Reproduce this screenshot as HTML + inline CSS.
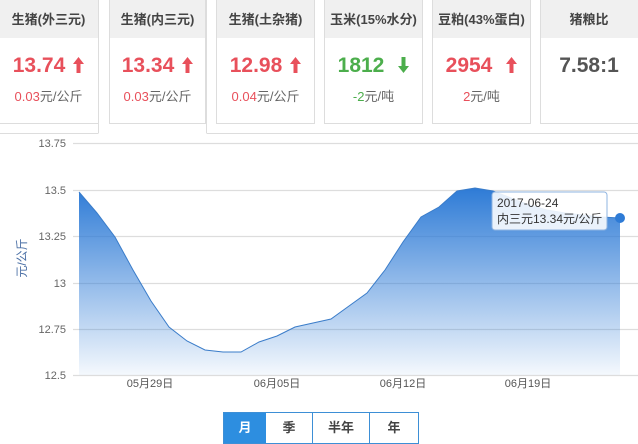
<!DOCTYPE html>
<html><head><meta charset="utf-8"><style>
body{margin:0;width:638px;height:441px;overflow:hidden;background:#fff;font-family:"Liberation Sans","Noto Sans CJK SC",sans-serif;position:relative}
.c{position:absolute;top:-2px;height:126px;border:1px solid #ddd;background:#fff;box-sizing:border-box;text-align:center}
.c .h{height:39px;background:#f0f0f0;line-height:41px;font-size:13px;color:#444;font-weight:bold}
.c .v{font-size:21px;font-weight:bold;margin-top:14px;height:28px;line-height:28px}
.c .s{font-size:13px;color:#666;margin-top:6px}
.r{color:#e8505b}.g{color:#4cae4c}
.ar{display:inline-block;margin-left:8px;vertical-align:-1px}
</style></head><body>
<div style="position:absolute;left:0;top:133px;width:638px;border-top:1px solid #ddd"></div>
<div class="c" style="left:-10px;width:109px"><div class="h" style="padding-left:8px">生猪(外三元)</div><div class="v r" style="padding-left:8px">13.74<svg class="ar" width="11" height="16" viewBox="0 0 11 16"><path d="M5.5 0L11 7H7.5V16H3.5V7H0Z" fill="#e8505b"/></svg></div><div class="s" style="padding-left:8px"><span class="r">0.03</span>元/公斤</div></div>
<div style="position:absolute;left:98px;top:-2px;width:109px;height:136px;border:1px solid #ddd;border-bottom:1px solid #fff;background:#fff;box-sizing:border-box"></div>
<div class="c" style="left:109px;width:97px"><div class="h">生猪(内三元)</div><div class="v r">13.34<svg class="ar" width="11" height="16" viewBox="0 0 11 16"><path d="M5.5 0L11 7H7.5V16H3.5V7H0Z" fill="#e8505b"/></svg></div><div class="s"><span class="r">0.03</span>元/公斤</div></div>
<div class="c" style="left:216px;width:99px"><div class="h">生猪(土杂猪)</div><div class="v r">12.98<svg class="ar" width="11" height="16" viewBox="0 0 11 16"><path d="M5.5 0L11 7H7.5V16H3.5V7H0Z" fill="#e8505b"/></svg></div><div class="s"><span class="r">0.04</span>元/公斤</div></div>
<div class="c" style="left:324px;width:99px"><div class="h">玉米(15%水分)</div><div class="v g">1812<svg class="ar" style="margin-left:14px" width="11" height="16" viewBox="0 0 11 16"><path d="M5.5 16L11 9H7.5V0H3.5V9H0Z" fill="#4cae4c"/></svg></div><div class="s"><span class="g">-2</span>元/吨</div></div>
<div class="c" style="left:432px;width:99px"><div class="h">豆粕(43%蛋白)</div><div class="v r">2954<svg class="ar" style="margin-left:14px" width="11" height="16" viewBox="0 0 11 16"><path d="M5.5 0L11 7H7.5V16H3.5V7H0Z" fill="#e8505b"/></svg></div><div class="s"><span class="r">2</span>元/吨</div></div>
<div class="c" style="left:540px;width:110px"><div class="h" style="padding-right:12px">猪粮比</div><div class="v" style="color:#555;padding-right:12px">7.58:1</div></div>
<svg width="638" height="441" style="position:absolute;left:0;top:0" font-family="Liberation Sans, Noto Sans CJK SC, sans-serif">
<defs><linearGradient id="gr" x1="0" y1="0" x2="0" y2="1"><stop offset="0" stop-color="#2e7bd6"/><stop offset="1" stop-color="#2e7bd6" stop-opacity="0.05"/></linearGradient></defs>
<g stroke="#ddd" stroke-width="1.2">
<line x1="73" y1="143.5" x2="638" y2="143.5"/><line x1="73" y1="190.5" x2="638" y2="190.5"/><line x1="73" y1="236.5" x2="638" y2="236.5"/><line x1="73" y1="283.5" x2="638" y2="283.5"/><line x1="73" y1="329.5" x2="638" y2="329.5"/><line x1="73" y1="375.5" x2="638" y2="375.5"/></g>
<g font-size="11" fill="#666" text-anchor="end"><text x="66" y="147">13.75</text><text x="66" y="194">13.5</text><text x="66" y="240">13.25</text><text x="66" y="287">13</text><text x="66" y="333">12.75</text><text x="66" y="379">12.5</text></g>
<text transform="translate(26,258) rotate(-90)" text-anchor="middle" font-size="12" fill="#4a6fa5">元/公斤</text>
<path d="M79,192 L97,213 L115,237 L133,270 L151,301 L169,327 L187,341 L205,350 L223,352 L241,352 L259,342 L277,336 L295,327 L313,323 L331,319 L349,306 L367,293 L385,270 L403,242 L421,217 L439,207 L457,191 L475,188 L493,191 L511,198 L529,205 L547,210 L565,213 L583,215 L601,217 L620,218 L620,375 L79,375Z" fill="url(#gr)"/>
<path d="M79,192 L97,213 L115,237 L133,270 L151,301 L169,327 L187,341 L205,350 L223,352 L241,352 L259,342 L277,336 L295,327 L313,323 L331,319 L349,306 L367,293 L385,270 L403,242 L421,217 L439,207 L457,191 L475,188 L493,191 L511,198 L529,205 L547,210 L565,213 L583,215 L601,217 L620,218" fill="none" stroke="#3a7cc9" stroke-width="1"/>
<g font-size="11" fill="#555" text-anchor="middle"><text x="150" y="387">05月29日</text><text x="277" y="387">06月05日</text><text x="403" y="387">06月12日</text><text x="528" y="387">06月19日</text></g>
<rect x="492" y="192" width="115" height="38" rx="3" fill="#fff" fill-opacity="0.88" stroke="#8fb4e0"/>
<text x="497" y="207" font-size="12" fill="#333">2017-06-24</text>
<text x="497" y="223" font-size="12" fill="#333">内三元13.34元/公斤</text>
<circle cx="620" cy="218" r="5" fill="#2e7bd6"/>
</svg>
<div style="position:absolute;left:223px;top:412px;height:30px;border:1px solid #3d8fd6;display:flex;font-size:13px;font-weight:bold;color:#444;line-height:30px;text-align:center">
<div style="width:42px;background:#2d8ee0;color:#fff">月</div><div style="width:46px;border-right:1px solid #3d8fd6">季</div><div style="width:56px;border-right:1px solid #3d8fd6">半年</div><div style="width:48px">年</div></div>
</body></html>
